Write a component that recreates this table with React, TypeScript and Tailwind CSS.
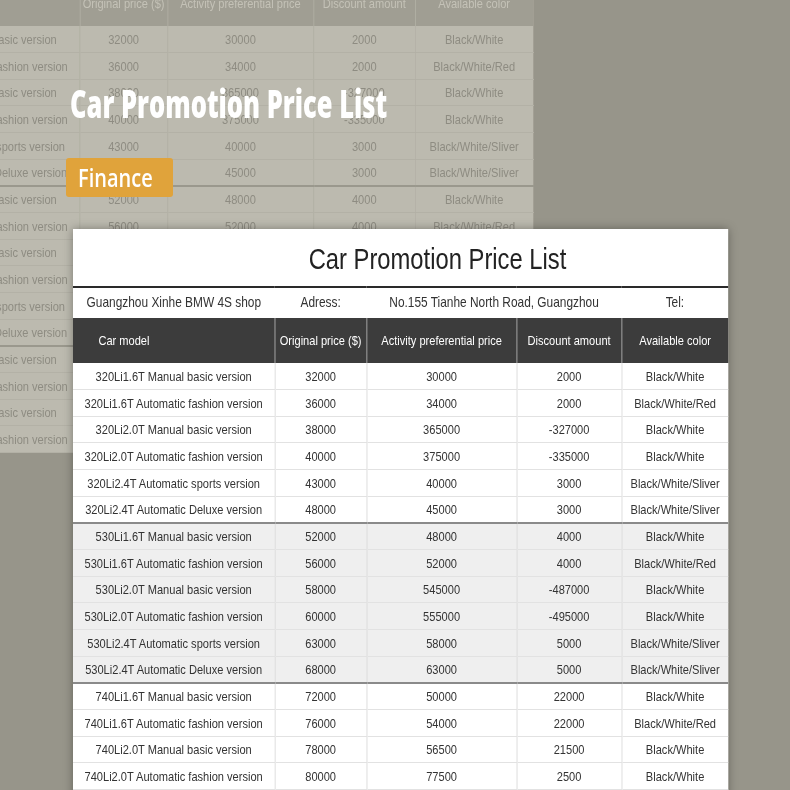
type Row = [string, string, string, string, string]

const groups: Row[][] = [
  [
    ['320Li1.6T Manual basic version', '32000', '30000', '2000', 'Black/White'],
    ['320Li1.6T Automatic fashion version', '36000', '34000', '2000', 'Black/White/Red'],
    ['320Li2.0T Manual basic version', '38000', '365000', '-327000', 'Black/White'],
    ['320Li2.0T Automatic fashion version', '40000', '375000', '-335000', 'Black/White'],
    ['320Li2.4T Automatic sports version', '43000', '40000', '3000', 'Black/White/Sliver'],
    ['320Li2.4T Automatic Deluxe version', '48000', '45000', '3000', 'Black/White/Sliver'],
  ],
  [
    ['530Li1.6T Manual basic version', '52000', '48000', '4000', 'Black/White'],
    ['530Li1.6T Automatic fashion version', '56000', '52000', '4000', 'Black/White/Red'],
    ['530Li2.0T Manual basic version', '58000', '545000', '-487000', 'Black/White'],
    ['530Li2.0T Automatic fashion version', '60000', '555000', '-495000', 'Black/White'],
    ['530Li2.4T Automatic sports version', '63000', '58000', '5000', 'Black/White/Sliver'],
    ['530Li2.4T Automatic Deluxe version', '68000', '63000', '5000', 'Black/White/Sliver'],
  ],
  [
    ['740Li1.6T Manual basic version', '72000', '50000', '22000', 'Black/White'],
    ['740Li1.6T Automatic fashion version', '76000', '54000', '22000', 'Black/White/Red'],
    ['740Li2.0T Manual basic version', '78000', '56500', '21500', 'Black/White'],
    ['740Li2.0T Automatic fashion version', '80000', '77500', '2500', 'Black/White'],
  ],
]

const headers = ['Original price ($)', 'Activity preferential price', 'Discount amount', 'Available color']

// The screenshot is squeezed horizontally, so both sheets are laid out wide
// and narrowed with scale-x-[0.82] from the left edge.

// dimmed copy of the sheet that sits behind the banner
function BackdropSheet() {
  return (
    <div className="absolute left-[-122px] top-[-18px] origin-left scale-x-[0.82] blur-[0.4px]">
      <table className="w-[799px] table-fixed border-collapse border-r border-[#a4a297] font-['Liberation_Sans',sans-serif] text-[13.5px]">
        <colgroup>
          <col className="w-[246px]" />
          <col className="w-[107px]" />
          <col className="w-[178px]" />
          <col className="w-[124px]" />
          <col className="w-[144px]" />
        </colgroup>
        <thead>
          <tr>
            <th className="h-[44px] bg-[#a09e93] pl-[30px] text-left font-normal text-[#c4c2b7]">Car model</th>
            {headers.map((h) => (
              <th key={h} className="h-[44px] border-l border-[#b4b2a7] bg-[#a09e93] p-0 text-center font-normal whitespace-nowrap text-[#c4c2b7]">
                {h}
              </th>
            ))}
          </tr>
        </thead>
        <tbody>
          {groups.map((g, gi) =>
            g.map((r, ri) => (
              <tr key={r[0]} className="bg-[#bcbaaf]">
                {r.map((c, ci) => (
                  <td
                    key={ci}
                    className={`h-[26.67px] border-b border-[#b3b1a6] p-0 pt-[1px] text-center leading-none whitespace-nowrap text-[#8e8c82] ${ci > 0 ? 'border-l border-l-[#b5b3a8]' : ''} ${gi > 0 && ri === 0 ? 'border-t-2 border-t-[#9a988d]' : ''}`}
                  >
                    {c}
                  </td>
                ))}
              </tr>
            )),
          )}
        </tbody>
      </table>
    </div>
  )
}

export default function App() {
  return (
    <div className="relative h-[790px] w-[790px] overflow-hidden bg-[#97958a]">
      <BackdropSheet />

      <div className="relative z-10 flex flex-col">
        {/* Banner */}
        <div className="flex h-[229px] flex-col items-start pt-[84px] pl-[66px]">
          <h1 className="ml-[4px] h-[38px] origin-left scale-x-[0.67] font-['Open_Sans',sans-serif] text-[38px] leading-none font-extrabold whitespace-nowrap text-white">
            Car Promotion Price List
          </h1>
          <div className="mt-[36px] flex h-[39px] w-[107px] items-center rounded-[3px] bg-[#e0a33b] pl-[12px]">
            <span className="origin-left scale-x-[0.8] font-['Open_Sans',sans-serif] text-[25px] leading-none font-semibold whitespace-nowrap text-white">
              Finance
            </span>
          </div>
        </div>

        {/* Price sheet */}
        <div className="ml-[73px] w-[799px] origin-left scale-x-[0.82] bg-white pb-[24px] shadow-[0_0_10px_rgba(0,0,0,0.35)] font-['Liberation_Sans',sans-serif]">
          <div className="flex h-[57px] justify-center pt-[16px] pl-[90px] text-[29px] leading-none text-[#222]">
            Car Promotion Price List
          </div>
          <table className="w-[799px] table-fixed border-collapse border-t-2 border-[#2a2a2a] text-[#333]">
            <colgroup>
              <col className="w-[246px]" />
              <col className="w-[112px]" />
              <col className="w-[183px]" />
              <col className="w-[128px]" />
              <col className="w-[130px]" />
            </colgroup>
            <thead>
              <tr className="text-[14.5px]">
                <td className="h-[31px] p-0 text-center whitespace-nowrap">Guangzhou Xinhe BMW 4S shop</td>
                <td className="h-[31px] p-0 text-center whitespace-nowrap">Adress:</td>
                <td colSpan={2} className="h-[31px] p-0 text-center whitespace-nowrap">No.155 Tianhe North Road, Guangzhou</td>
                <td className="h-[31px] p-0 text-center whitespace-nowrap">Tel:</td>
              </tr>
              <tr className="text-[13.5px]">
                <th className="h-[45px] bg-[#3c3c3c] pt-[2px] pl-[31px] text-left font-normal text-white">Car model</th>
                {headers.map((h) => (
                  <th key={h} className="h-[45px] border-l border-[#9a9a9a] bg-[#3c3c3c] p-0 pt-[2px] text-center font-normal whitespace-nowrap text-white">
                    {h}
                  </th>
                ))}
              </tr>
            </thead>
            <tbody className="text-[13.5px]">
              {groups.map((g, gi) =>
                g.map((r, ri) => (
                  <tr key={r[0]} className={gi === 1 ? 'bg-[#efefef]' : 'bg-white'}>
                    {r.map((c, ci) => (
                      <td
                        key={ci}
                        className={`h-[26.67px] border-b border-[#e2e2e2] p-0 pt-[1px] text-center leading-none whitespace-nowrap ${ci > 0 ? 'border-l border-l-[#d6d6d6]' : ''} ${gi > 0 && ri === 0 ? 'border-t-2 border-t-[#8a8a8a]' : ''}`}
                      >
                        {c}
                      </td>
                    ))}
                  </tr>
                )),
              )}
            </tbody>
          </table>
        </div>
      </div>
    </div>
  )
}
